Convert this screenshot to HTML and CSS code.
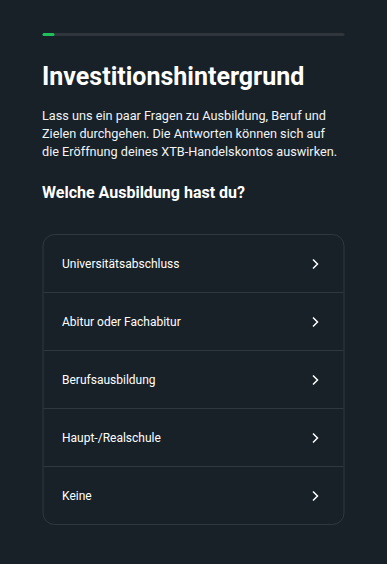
FILE: index.html
```html
<!DOCTYPE html>
<html lang="de">
<head>
    <meta charset="UTF-8" />
    <title>Investitionshintergrund</title>
    <link rel="stylesheet" href="styles.css">
</head>
<body>

<div class="page">
    <div class="progress"><div class="progress-fill"></div></div>

    <h1>Investitionshintergrund</h1>
    <p class="intro">Lass uns ein paar Fragen zu Ausbildung, Beruf und Zielen durchgehen. Die Antworten können sich auf die Eröffnung deines XTB-Handelskontos auswirken.</p>

    <h2>Welche Ausbildung hast du?</h2>

    <div class="options">
        <div class="option">Universitätsabschluss <span class="chev"><svg width="8" height="12" viewBox="0 0 8 12"><path d="M1.5 1.5 L6 6 L1.5 10.5" fill="none" stroke="#fff" stroke-width="1.5"/></svg></span></div>
        <div class="option">Abitur oder Fachabitur <span class="chev"><svg width="8" height="12" viewBox="0 0 8 12"><path d="M1.5 1.5 L6 6 L1.5 10.5" fill="none" stroke="#fff" stroke-width="1.5"/></svg></span></div>
        <div class="option">Berufsausbildung <span class="chev"><svg width="8" height="12" viewBox="0 0 8 12"><path d="M1.5 1.5 L6 6 L1.5 10.5" fill="none" stroke="#fff" stroke-width="1.5"/></svg></span></div>
        <div class="option">Haupt-/Realschule <span class="chev"><svg width="8" height="12" viewBox="0 0 8 12"><path d="M1.5 1.5 L6 6 L1.5 10.5" fill="none" stroke="#fff" stroke-width="1.5"/></svg></span></div>
        <div class="option">Keine <span class="chev"><svg width="8" height="12" viewBox="0 0 8 12"><path d="M1.5 1.5 L6 6 L1.5 10.5" fill="none" stroke="#fff" stroke-width="1.5"/></svg></span></div>
    </div>
</div>

</body>
</html>
```

FILE: styles.css
```css
body {
    margin: 0;
    background-color: #182128;
    color: #fff;
    font-family: Roboto, "Liberation Sans", sans-serif;
}

.page {
    width: 302px;
    margin: 0 auto;
    padding: 33px 0 40px;
    transform: translateX(-0.5px);
}

.progress {
    height: 3px;
    border-radius: 2px;
    background-color: #30363b;
}

.progress-fill {
    width: 12px;
    height: 3px;
    border-radius: 2px;
    background-color: #1fbf5b;
}

h1 {
    font-size: 25px;
    font-weight: 700;
    margin: 26px 0 0;
    line-height: 30px;
}

.intro {
    font-size: 12.7px;
    line-height: 18px;
    margin: 15px 0 0;
    color: #f1f3f4;
}

h2 {
    font-size: 16px;
    font-weight: 700;
    margin: 22px 0 0;
    line-height: 20px;
}

.options {
    margin-top: 31px;
    border: 1px solid #30383e;
    border-radius: 12px;
}

.option {
    display: flex;
    justify-content: space-between;
    align-items: center;
    height: 57px;
    padding: 0 24px 0 19px;
    font-size: 12px;
    border-bottom: 1px solid #30383e;
}

.option:last-child {
    border-bottom: none;
}

.chev {
    display: flex;
}
```
